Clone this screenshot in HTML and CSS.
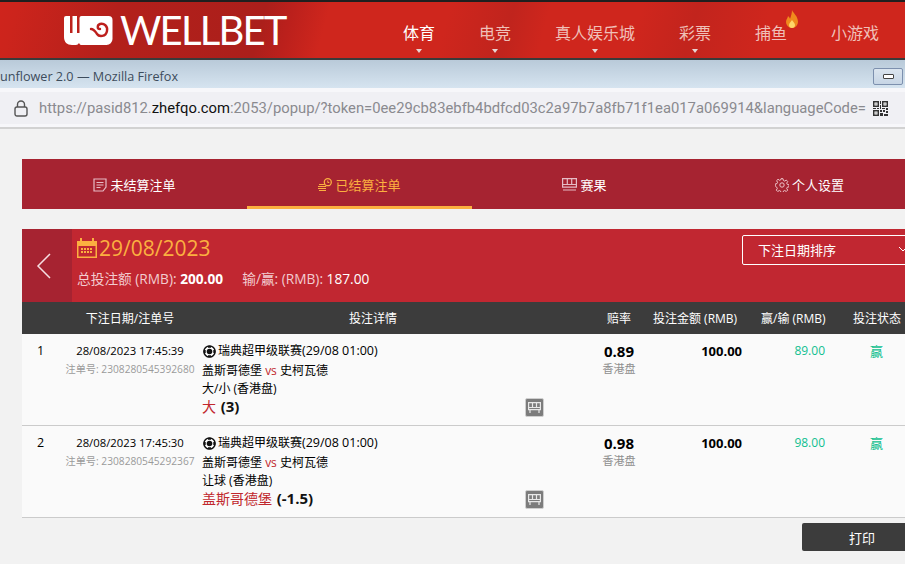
FILE: index.html
```html
<!DOCTYPE html>
<html lang="zh">
<head>
<meta charset="utf-8">
<title>WellBet</title>
<link rel="stylesheet" href="styles.css">
</head>
<body>
<div class="screen">
  <header class="site-header">
    <div class="logo">
      <svg class="logo-mark" width="49" height="29" viewBox="0 0 49 29">
        <path fill="#fff" d="M0 2a2 2 0 0 1 2-2h4v17h2.500V0h4.500v17h2.500V2a2 2 0 0 1 2-2h27a4 4 0 0 1 4 4v19a6 6 0 0 1-6 6H20a4 4 0 0 1-5-2 4 4 0 0 1-3 2H8c-5 0-8-3-8-8z"/>
        <path fill="none" stroke="#bd1f1c" stroke-width="2.400" stroke-linecap="round" d="M27 13c3 0 4 2 6 5 2 3 9 3 10-3 1-5-3-8-7-7-3 1-3 5 0 5"/>
      </svg>
      <span class="logo-text">WELLBET</span>
    </div>
    <nav class="site-nav">
      <a class="nav-item active">体育<i class="caret"></i></a>
      <a class="nav-item">电竞<i class="caret"></i></a>
      <a class="nav-item">真人娱乐城<i class="caret"></i></a>
      <a class="nav-item">彩票<i class="caret"></i></a>
      <a class="nav-item">捕鱼
        <svg class="flame" width="14" height="20" viewBox="0 0 14 20"><path fill="#f08a1d" d="M7 0c1 3 6 6 6 12a6 6 0 0 1-12 0c0-3 2-4 2-6 1 1 2 2 2 3 1-3 2-6 2-9z"/><path fill="#ffd76a" d="M7 10c1 2 3 3 3 5a3 3 0 0 1-6 0c0-2 2-3 3-5z"/></svg>
      </a>
      <a class="nav-item">小游戏</a>
    </nav>
  </header>

  <div class="win-title">
    <span class="win-title-text">Sunflower 2.0 — Mozilla Firefox</span>
    <span class="win-btn"><i></i></span>
  </div>
  <div class="url-wrap">
    <div class="url-bar">
      <svg class="lock" width="14" height="17" viewBox="0 0 14 17"><rect x="1" y="7" width="12" height="9" rx="2" fill="none" stroke="#555" stroke-width="1.4"/><path fill="none" stroke="#555" stroke-width="1.4" d="M3.5 7V4.5a3.5 3.5 0 0 1 7 0V7"/></svg>
      <span class="url-text">https://pasid812.<b>zhefqo.com</b>:2053/popup/?token=0ee29cb83ebfb4bdfcd03c2a97b7a8fb71f1ea017a069914&amp;languageCode=</span>
      <svg class="qr" width="15" height="15" viewBox="0 0 15 15"><path fill="#333" d="M0 0h6v6H0zM9 0h6v6H9zM0 9h6v6H0zM7 0h1v3H7zM7 4h1v4H7zM0 7h3v1H0zM4 7h2v1H4zM9 7h3v1H9zM13 7h2v2h-2zM7 9h2v2H7zM10 9h2v2h-2zM13 10h2v2h-2zM7 12h3v3H7zM11 13h4v2h-4z"/><path fill="#fff" d="M1.5 1.5h3v3h-3zM10.500 1.500h3v3h-3zM1.500 10.500h3v3h-3z"/><path fill="#333" d="M2.500 2.500h1v1h-1zM11.500 2.500h1v1h-1zM2.500 11.500h1v1h-1z"/></svg>
    </div>
  </div>

  <main class="content">
    <div class="tabs">
      <a class="tab">
        <svg class="tab-icon" width="14" height="14" viewBox="0 0 14 14"><path fill="none" stroke="#e6bcc6" stroke-width="1.200" d="M1 1h12v8l-3 4H1z"/><path fill="none" stroke="#e6bcc6" d="M3.500 4.500h7M3.500 7h7M3.500 9.500h4"/></svg>未结算注单
      </a>
      <a class="tab active">
        <svg class="tab-icon" width="14" height="14" viewBox="0 0 14 14"><path fill="none" stroke="#fbb040" stroke-width="1.200" d="M1 6.500h6M0 8.500h8M0 10.500h8M1 12.500h7"/><circle cx="9.800" cy="4.200" r="3.500" fill="#a62331" stroke="#fbb040" stroke-width="1.300"/><path fill="none" stroke="#fbb040" d="M9.800 2.500v2h1.500"/></svg>已结算注单
      </a>
      <a class="tab">
        <svg class="tab-icon" width="15" height="13" viewBox="0 0 15 13"><path fill="none" stroke="#e6bcc6" stroke-width="1.200" d="M.6.6h13.800v8.500H.6zM5.300 1v5M9.700 1v5M1 6.500h13M1 12h13"/></svg>赛果
      </a>
      <a class="tab">
        <svg class="tab-icon" width="14" height="14" viewBox="0 0 14 14"><circle cx="7" cy="7" r="2.200" fill="none" stroke="#eec6cb"/><path fill="none" stroke="#eec6cb" d="M6 .7h2l.4 1.800 1.300.6 1.600-1 1.400 1.400-1 1.600.6 1.300 1.800.4v2l-1.800.4-.6 1.300 1 1.600-1.400 1.400-1.600-1-1.300.6-.4 1.800H6l-.4-1.800-1.300-.6-1.600 1-1.400-1.400 1-1.600-.6-1.300L.2 8V6l1.800-.4.600-1.300-1-1.600L3 1.300l1.600 1 1.300-.6z"/></svg>个人设置
      </a>
    </div>

    <section class="panel">
      <div class="summary">
        <a class="back"><svg width="16" height="26" viewBox="0 0 16 26"><path fill="none" stroke="#f6dfe1" stroke-width="1.500" d="M14 1L2 13l12 12"/></svg></a>
        <div class="summary-main">
          <div class="date">
            <svg class="cal" width="20" height="20" viewBox="0 0 20 20"><path fill="#fbb040" d="M0 3h3V0h2v3h10V0h2v3h3v17H0zM1.500 8v10.500h17V8z"/><path fill="#fbb040" d="M4 10h2v2H4zM7 10h2v2H7zM10 10h2v2h-2zM13 10h2v2h-2zM4 13h2v2H4zM7 13h2v2H7zM10 13h2v2h-2zM13 13h2v2h-2z"/></svg>
            <span>29/08/2023</span>
          </div>
          <div class="totals">
            <span class="total">总投注额 (RMB): <b>200.00</b></span>
            <span class="total">输/赢: (RMB): <em>187.00</em></span>
          </div>
        </div>
        <div class="sort"><span>下注日期排序</span><svg width="10" height="6" viewBox="0 0 10 6"><path fill="none" stroke="#fff" d="M1 1l4 4 4-4"/></svg></div>
      </div>

      <div class="row row-head">
        <div class="c-no"></div>
        <div class="c-date">下注日期/注单号</div>
        <div class="c-detail">投注详情</div>
        <div class="c-odds">赔率</div>
        <div class="c-stake">投注金额 (RMB)</div>
        <div class="c-win">赢/输 (RMB)</div>
        <div class="c-status">投注状态</div>
      </div>

      <div class="row bet">
        <div class="c-no">1</div>
        <div class="c-date"><p>28/08/2023 17:45:39</p><p class="muted">注单号: 2308280545392680</p></div>
        <div class="c-detail">
          <p class="league"><svg class="ball" width="13" height="13" viewBox="0 0 13 13"><circle cx="6.500" cy="6.500" r="5.600" fill="#fff" stroke="#111" stroke-width="1.500"/><circle cx="6.500" cy="6.500" r="2.800" fill="#111"/><path fill="#111" d="M5 .7h3v2H5zM.7 5h2v3h-2zM10.300 5h2v3h-2zM5 10.300h3v2H5z"/></svg><span>瑞典超甲级联赛<span class="league-time">(29/08 01:00)</span></span></p>
          <p>盖斯哥德堡 <span class="vs">vs</span> 史柯瓦德</p>
          <p>大/小 (香港盘)</p>
          <p class="pick"><span>大</span> <b>(3)</b></p>
          <a class="result-btn"><svg width="13" height="12" viewBox="0 0 13 12"><path fill="none" stroke="#e8e8e8" stroke-width="1.200" d="M.6.6h11.800v7H.6zM4.500 1v4M8.500 1v4M1 5.500h11M2 8v3M11 8v3"/></svg></a>
        </div>
        <div class="c-odds"><p class="odds">0.89</p><p class="muted">香港盘</p></div>
        <div class="c-stake"><b>100.00</b></div>
        <div class="c-win">89.00</div>
        <div class="c-status">赢</div>
      </div>

      <div class="row bet">
        <div class="c-no">2</div>
        <div class="c-date"><p>28/08/2023 17:45:30</p><p class="muted">注单号: 2308280545292367</p></div>
        <div class="c-detail">
          <p class="league"><svg class="ball" width="13" height="13" viewBox="0 0 13 13"><circle cx="6.500" cy="6.500" r="5.600" fill="#fff" stroke="#111" stroke-width="1.500"/><circle cx="6.500" cy="6.500" r="2.800" fill="#111"/><path fill="#111" d="M5 .7h3v2H5zM.7 5h2v3h-2zM10.300 5h2v3h-2zM5 10.300h3v2H5z"/></svg><span>瑞典超甲级联赛<span class="league-time">(29/08 01:00)</span></span></p>
          <p>盖斯哥德堡 <span class="vs">vs</span> 史柯瓦德</p>
          <p>让球 (香港盘)</p>
          <p class="pick"><span>盖斯哥德堡</span> <b>(-1.5)</b></p>
          <a class="result-btn"><svg width="13" height="12" viewBox="0 0 13 12"><path fill="none" stroke="#e8e8e8" stroke-width="1.200" d="M.6.6h11.800v7H.6zM4.500 1v4M8.500 1v4M1 5.500h11M2 8v3M11 8v3"/></svg></a>
        </div>
        <div class="c-odds"><p class="odds">0.98</p><p class="muted">香港盘</p></div>
        <div class="c-stake"><b>100.00</b></div>
        <div class="c-win">98.00</div>
        <div class="c-status">赢</div>
      </div>

      <div class="actions"><a class="print">打印</a></div>
    </section>
  </main>
</div>
</body>
</html>
```
FILE: styles.css
```css
* { box-sizing: border-box; }
html, body { margin: 0; padding: 0; height: 100%; overflow: hidden; background: #f2f2f2; }
body { font-family: "Open Sans", "Noto Sans CJK SC", sans-serif; font-size: 12px; color: #111; }
p { margin: 0; }
em { font-style: normal; }
.screen { width: 905px; height: 564px; overflow: hidden; }

.site-header {
  height: 60px; display: flex; align-items: stretch;
  border-top: 2px solid #1f1f1f; border-bottom: 2px solid #3a3a3a;
  background: linear-gradient(105deg, #cf241c 0, #cc241c 2%, #b3201b 13%, #ab1f1b 29%, #bb201c 32%, #cf261d 36%, #cf261d 49%, #c0241d 56%, #cf261d 60%, #cf261d 70%, #c2241d 76%, #cf261d 84%);
}
.logo { display: flex; align-items: center; flex: none; margin-left: 64px; width: 320px; gap: 7px; }
.logo-mark { display: block; flex: none; }
.logo-text { color: #fff; font: 400 40px/1 "Lato", sans-serif; letter-spacing: -1.8px; }
.site-nav { display: flex; margin-left: 19px; flex: none; }
.nav-item {
  position: relative; display: block; color: #efc0b9; font-size: 16px; line-height: 22px;
  padding-top: 20px; margin-right: 44px; white-space: nowrap;
}
.nav-item.active { color: #fff; }
.caret {
  position: absolute; left: 50%; bottom: 5px; margin-left: -3px; width: 0; height: 0;
  border-left: 3.500px solid transparent; border-right: 3.500px solid transparent; border-top: 4px solid #e8d5d3;
}
.flame { position: absolute; left: 30px; top: 8px; }

.win-title {
  height: 28px; display: flex; align-items: center; justify-content: space-between;
  background: linear-gradient(#b9cad9, #d6e4f0);
  padding-right: 2px; overflow: hidden;
}
.win-title-text { margin-left: -7px; margin-top: 4px; font-size: 12.650px; color: #3d4c5c; }
.win-btn {
  width: 30px; height: 17px; margin-top: 4px; border: 1px solid #7d90ae; border-radius: 2px;
  background: linear-gradient(#dbe5ef, #c7d5e5); display: flex; align-items: center; justify-content: center;
}
.win-btn i { display: block; width: 11px; height: 5px; background: #fff; border: 1px solid #444; border-radius: 1px; }
.url-wrap { height: 41px; padding-top: 4px; border-bottom: 2px solid #d2d2d2; background: #f7f7fa; }
.url-bar { height: 32px; background: #f0f0f4; display: flex; align-items: center; padding-left: 14px; white-space: nowrap; }
.lock { flex: none; }
.url-text { margin-left: 11px; width: 827px; flex: none; color: #8a8a8f; font: 14.800px/1 "Roboto", sans-serif; }
.url-text b { font-weight: 400; color: #111; }
.qr { flex: none; margin-left: 7px; }

.content { padding: 30px 0 0 22px; width: 1000px; }
.tabs { display: flex; height: 50px; width: 900px; background: #a62331; }
.tab {
  width: 225px; display: flex; align-items: center; justify-content: center; gap: 3px;
  color: #fff; font-size: 13px; padding-top: 1px;
}
.tab.active { color: #fbb040; box-shadow: inset 0 -3px 0 #fbb040; }
.tab-icon { flex: none; }

.panel { margin-top: 20px; width: 900px; }
.summary { display: flex; height: 73px; background: #c12731; color: #fff; }
.back { width: 50px; background: #a62331; display: flex; align-items: center; justify-content: center; flex: none; padding: 1px 6px 0 0; }
.summary-main { width: 670px; padding: 6px 0 0 5px; flex: none; }
.date { display: flex; align-items: center; gap: 2px; height: 26px; color: #fbb040; font-size: 21px; }
.cal { flex: none; }
.totals { display: flex; gap: 19px; margin-top: 8px; font-size: 13.700px; line-height: 20px; color: #f2ccd0; }
.total b { color: #fff; font-weight: 700; }
.total em { color: #fff; }
.sort {
  width: 190px; height: 30px; margin-top: 6px; flex: none; border: 1px solid #fff; border-radius: 2px;
  display: flex; align-items: center; justify-content: space-between; padding: 0 23px 2px 15px; font-size: 13px;
}

.row { display: grid; grid-template-columns: 43px 130px 390px 68px 92px 95px 75px; }
.row-head { height: 32px; background: #3c3c3c; color: #fff; align-items: center; font-size: 12px; text-align: center; padding-bottom: 1px; white-space: nowrap; }
.row-head .c-no { padding: 0; }
.row-head .c-detail { padding-right: 34px; }
.row-head .c-stake { text-align: left; }
.row-head .c-win { text-align: left; padding-left: 16px; }
.row-head .c-status { text-align: left; padding-left: 13px; }
.bet { height: 92px; background: #fafafa; border-bottom: 1px solid #cbcbcb; padding-top: 8px; line-height: 18px; color: #000; }
.c-no { padding-left: 15px; font-size: 12.500px; }
.bet .c-date { text-align: center; font-size: 11.300px; white-space: nowrap; }
.bet .c-date .muted { font-size: 10.200px; }
.muted { color: #9a9a9a; }
.bet .c-detail { position: relative; padding-left: 7px; font-size: 12px; }
.league { display: flex; align-items: center; gap: 2px; margin-bottom: 2px; }
.league-time { font-size: 12.500px; }
.ball { flex: none; margin-left: 1px; }
.vs { color: #c1272d; }
.pick { font-size: 14px; line-height: 17px; }
.pick span { color: #c1272d; margin-right: 1px; }
.pick b { font-weight: 700; font-size: 15px; color: #111; }
.result-btn {
  position: absolute; left: 330px; top: 56px; width: 19px; height: 19px; background: #7c7c7c;
  border: 1px solid #cfcfcf; border-radius: 2px; display: flex; align-items: center; justify-content: center;
}
.bet .c-odds { text-align: center; }
.odds { font-size: 15px; font-weight: 700; }
.bet .c-odds .muted { font-size: 11px; color: #8e8e8e; }
.bet .c-stake { text-align: right; font-size: 13px; padding-right: 3px; }
.bet .c-win { text-align: right; font-size: 12px; color: #10c090; padding-right: 15px; }
.bet .c-status { padding-left: 30px; color: #10c090; font-size: 13px; }

.actions { display: flex; justify-content: flex-end; padding-top: 5px; }
.print {
  width: 120px; height: 28px; background: #3c3c3c; color: #fff; font-size: 13px;
  border-radius: 2px; display: flex; align-items: center; justify-content: center;
}
```
